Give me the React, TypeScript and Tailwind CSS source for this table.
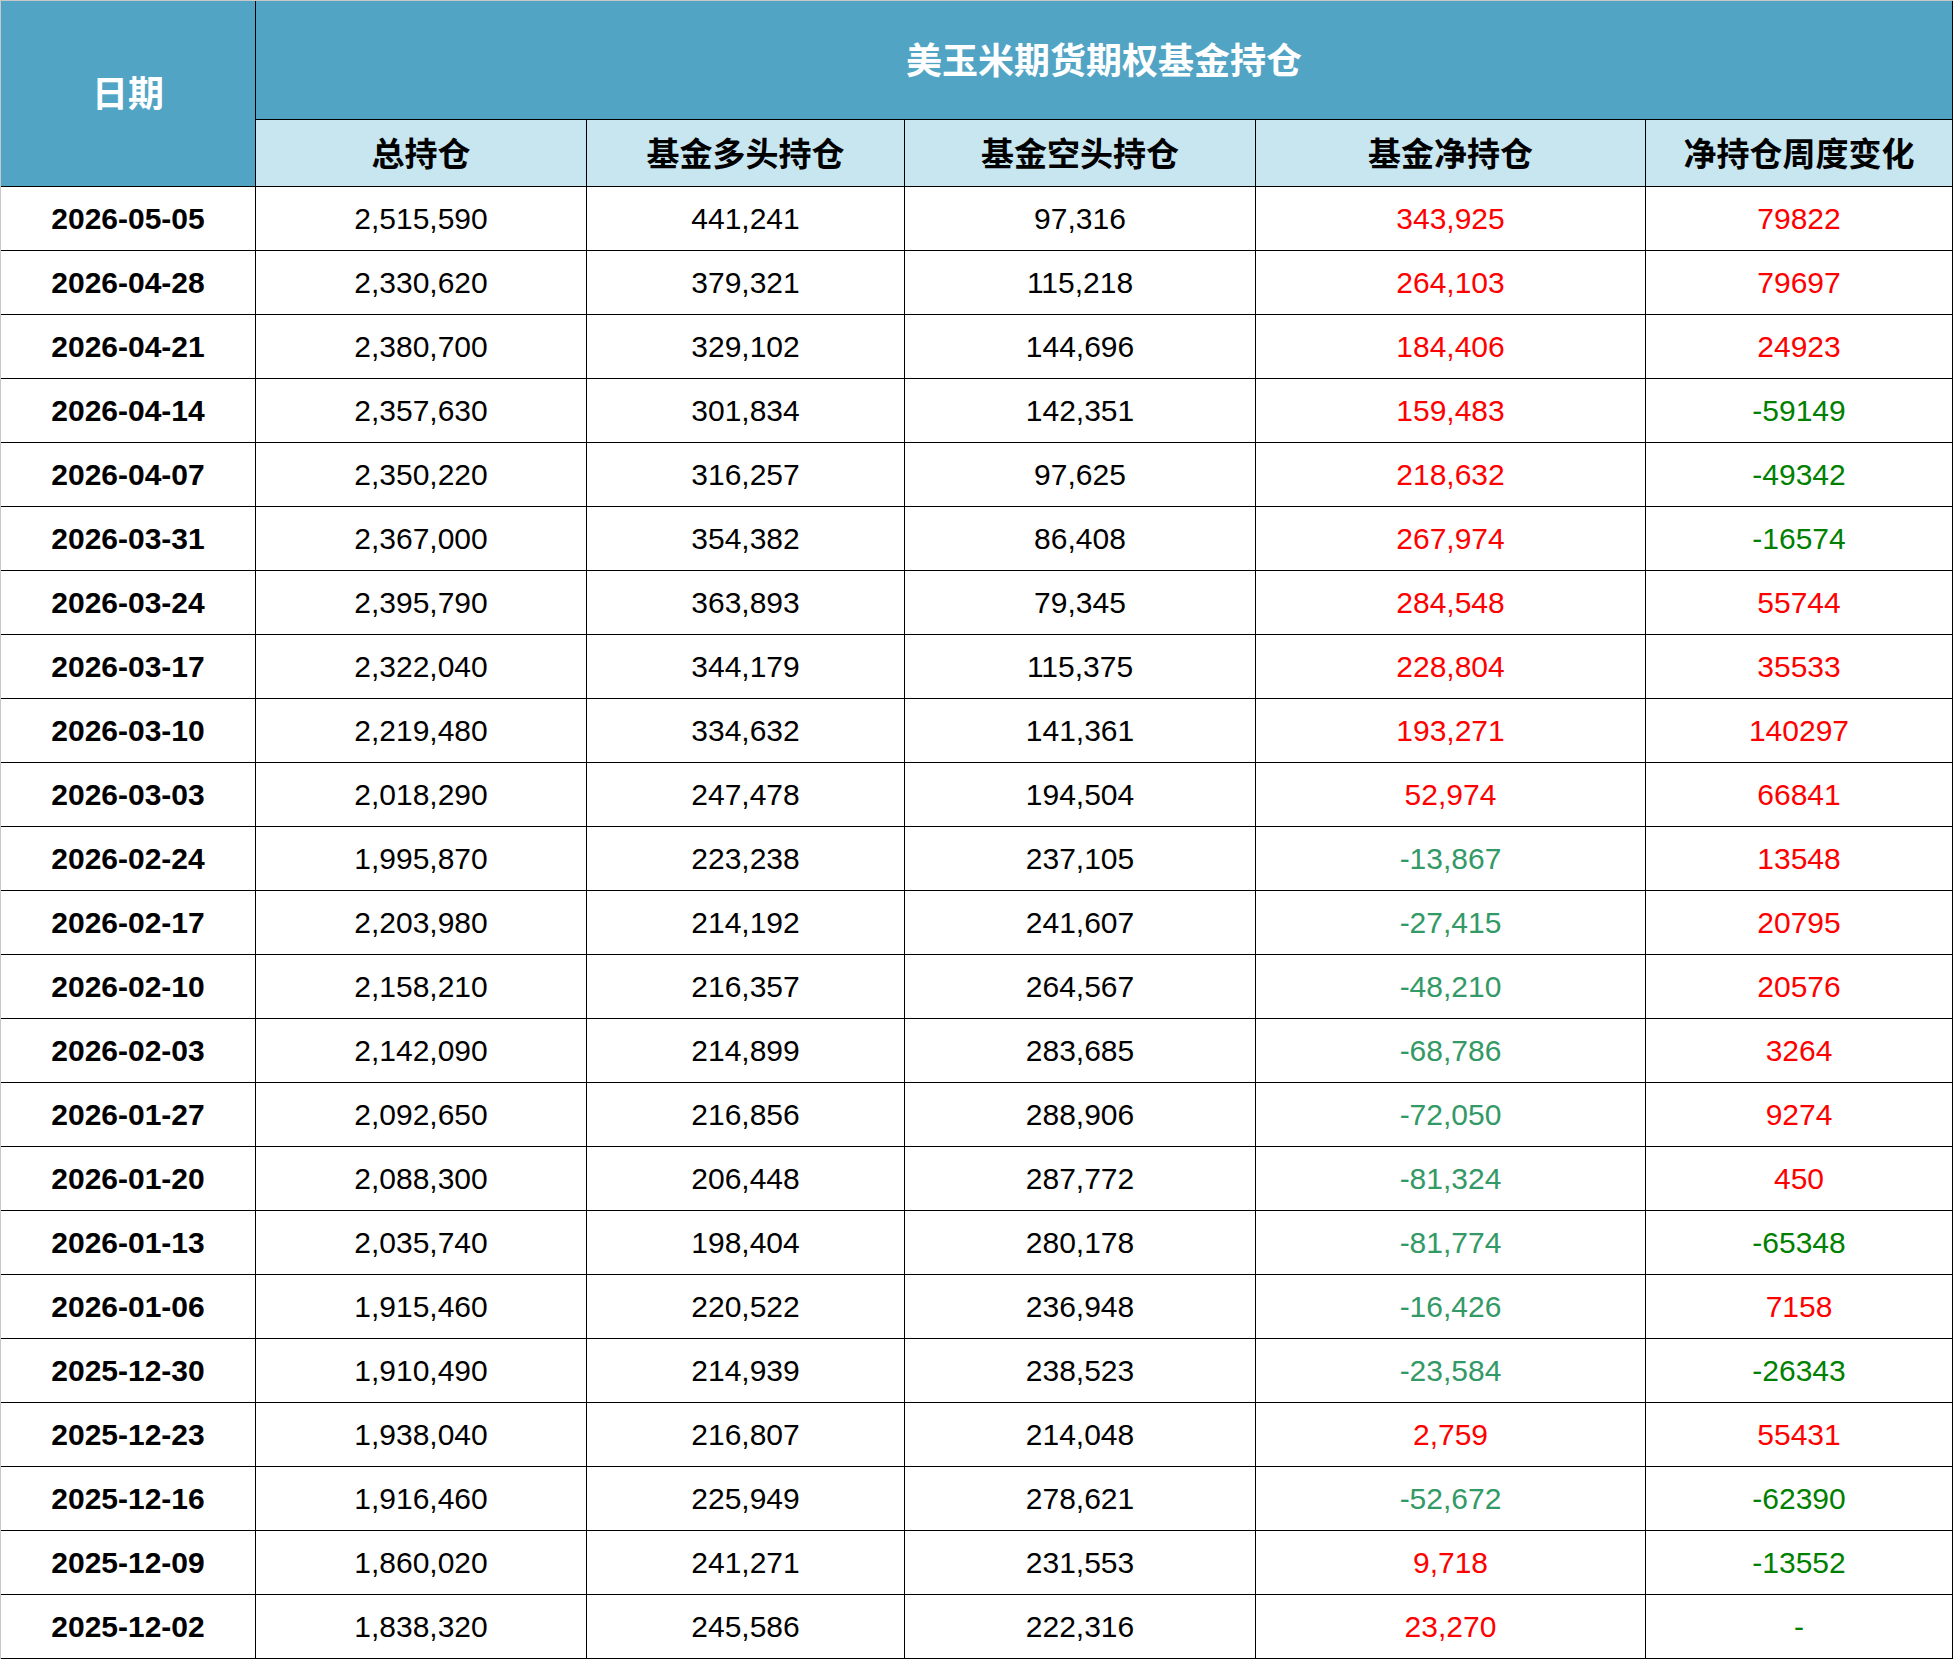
import React from 'react'

type Row = [string, string, string, string, string, string]

const rows: Row[] = [
  ['2026-05-05', '2,515,590', '441,241', '97,316', '343,925', '79822'],
  ['2026-04-28', '2,330,620', '379,321', '115,218', '264,103', '79697'],
  ['2026-04-21', '2,380,700', '329,102', '144,696', '184,406', '24923'],
  ['2026-04-14', '2,357,630', '301,834', '142,351', '159,483', '-59149'],
  ['2026-04-07', '2,350,220', '316,257', '97,625', '218,632', '-49342'],
  ['2026-03-31', '2,367,000', '354,382', '86,408', '267,974', '-16574'],
  ['2026-03-24', '2,395,790', '363,893', '79,345', '284,548', '55744'],
  ['2026-03-17', '2,322,040', '344,179', '115,375', '228,804', '35533'],
  ['2026-03-10', '2,219,480', '334,632', '141,361', '193,271', '140297'],
  ['2026-03-03', '2,018,290', '247,478', '194,504', '52,974', '66841'],
  ['2026-02-24', '1,995,870', '223,238', '237,105', '-13,867', '13548'],
  ['2026-02-17', '2,203,980', '214,192', '241,607', '-27,415', '20795'],
  ['2026-02-10', '2,158,210', '216,357', '264,567', '-48,210', '20576'],
  ['2026-02-03', '2,142,090', '214,899', '283,685', '-68,786', '3264'],
  ['2026-01-27', '2,092,650', '216,856', '288,906', '-72,050', '9274'],
  ['2026-01-20', '2,088,300', '206,448', '287,772', '-81,324', '450'],
  ['2026-01-13', '2,035,740', '198,404', '280,178', '-81,774', '-65348'],
  ['2026-01-06', '1,915,460', '220,522', '236,948', '-16,426', '7158'],
  ['2025-12-30', '1,910,490', '214,939', '238,523', '-23,584', '-26343'],
  ['2025-12-23', '1,938,040', '216,807', '214,048', '2,759', '55431'],
  ['2025-12-16', '1,916,460', '225,949', '278,621', '-52,672', '-62390'],
  ['2025-12-09', '1,860,020', '241,271', '231,553', '9,718', '-13552'],
  ['2025-12-02', '1,838,320', '245,586', '222,316', '23,270', '-'],
]

const cjk = "font-['Noto_Sans_CJK_SC',sans-serif] font-bold"
const num = "font-['Liberation_Sans',Arial,sans-serif] text-[30px]"
const cell = 'flex items-center justify-center border-r border-b border-black'
const subCols = ['总持仓', '基金多头持仓', '基金空头持仓', '基金净持仓', '净持仓周度变化']

function netColor(v: string) {
  return v.startsWith('-') ? 'text-[#339966]' : 'text-[#ff0000]'
}

function changeColor(v: string) {
  return v.startsWith('-') ? 'text-[#008000]' : 'text-[#ff0000]'
}

export default function App() {
  return (
    <div className="w-[1953px] bg-white border-t border-l border-[#c8c8c8]">
      <div className="grid grid-cols-[255px_331px_318px_351px_390px_307px] grid-rows-[119px_67px]">
        <div className={`${cell} row-span-2 pb-[5px] bg-[#52a4c5] text-white text-[36px] ${cjk}`}>日期</div>
        <div className={`${cell} col-span-5 pb-[5px] bg-[#52a4c5] text-white text-[36px] ${cjk}`}>
          美玉米期货期权基金持仓
        </div>
        {subCols.map(c => (
          <div key={c} className={`${cell} bg-[#c8e6f0] text-black text-[33px] ${cjk}`}>
            {c}
          </div>
        ))}
      </div>
      {rows.map(r => (
        <div key={r[0]} className="grid grid-cols-[255px_331px_318px_351px_390px_307px] h-[64px]">
          <div className={`${cell} ${num} font-bold text-black`}>{r[0]}</div>
          <div className={`${cell} ${num} text-black`}>{r[1]}</div>
          <div className={`${cell} ${num} text-black`}>{r[2]}</div>
          <div className={`${cell} ${num} text-black`}>{r[3]}</div>
          <div className={`${cell} ${num} ${netColor(r[4])}`}>{r[4]}</div>
          <div className={`${cell} ${num} ${changeColor(r[5])}`}>{r[5]}</div>
        </div>
      ))}
    </div>
  )
}
